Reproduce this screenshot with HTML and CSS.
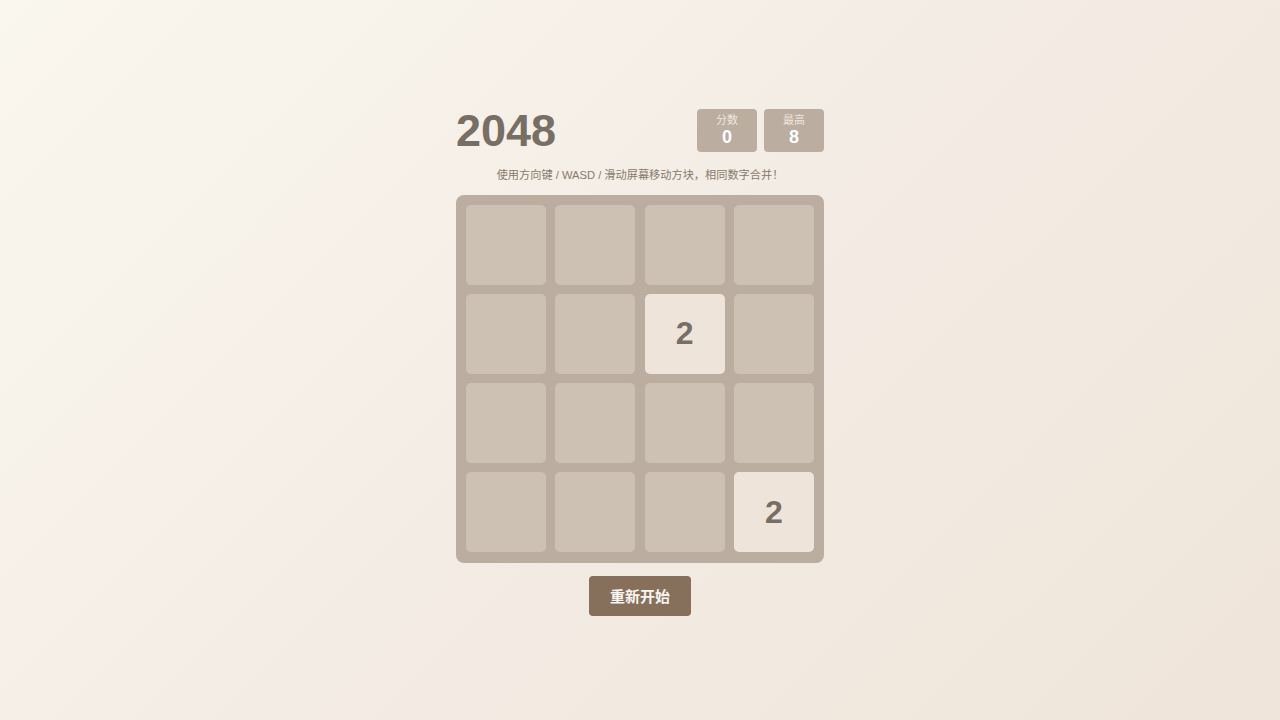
FILE: index.html
```html
<!DOCTYPE html>
<html lang="zh">
<head>
<meta charset="utf-8">
<title>2048</title>
<link rel="stylesheet" href="styles.css">
</head>
<body>
<main class="game">
  <header class="header">
    <h1 class="title">2048</h1>
    <div class="scores">
      <div class="score-box"><span class="score-label">分数</span><span class="score-value">0</span></div>
      <div class="score-box"><span class="score-label">最高</span><span class="score-value">8</span></div>
    </div>
  </header>
  <p class="hint">使用方向键 / WASD / 滑动屏幕移动方块，相同数字合并！</p>
  <div class="board">
    <div class="cell"></div><div class="cell"></div><div class="cell"></div><div class="cell"></div>
    <div class="cell"></div><div class="cell"></div><div class="cell tile-2">2</div><div class="cell"></div>
    <div class="cell"></div><div class="cell"></div><div class="cell"></div><div class="cell"></div>
    <div class="cell"></div><div class="cell"></div><div class="cell"></div><div class="cell tile-2">2</div>
  </div>
  <div class="actions"><button class="restart">重新开始</button></div>
</main>
</body>
</html>
```
FILE: styles.css
```css
* { box-sizing: border-box; }
html, body { margin: 0; height: 100%; }
body {
  font-family: "Liberation Sans", Arial, "Noto Sans CJK SC", sans-serif;
  background: linear-gradient(135deg, #faf7ee 0%, #f3ebe3 55%, #efe5da 100%);
  display: flex;
  align-items: center;
  justify-content: center;
  min-height: 100vh;
  color: #776e65;
}
.game { width: 368px; padding-top: 4px; }
.header {
  display: flex;
  justify-content: space-between;
  align-items: center;
  height: 43px;
}
.title {
  margin: 0;
  font-size: 45px;
  font-weight: bold;
  color: #776e65;
  line-height: 1;
}
.scores { display: flex; gap: 7px; }
.score-box {
  width: 60px;
  height: 43px;
  background: #bbada0;
  border-radius: 4px;
  display: flex;
  flex-direction: column;
  align-items: center;
  justify-content: center;
  padding-top: 1px;
}
.score-label { font-size: 11px; color: #efe7df; line-height: 13px; }
.score-value { font-size: 18px; font-weight: bold; color: #fff; line-height: 20px; }
.hint {
  margin: 14px 0 11px;
  text-align: center;
  font-size: 11.2px;
  line-height: 18px;
  color: #86796c;
}
.board {
  background: #bbada0;
  border-radius: 8px;
  padding: 10px;
  display: grid;
  grid-template-columns: repeat(4, 80px);
  grid-template-rows: repeat(4, 80px);
  gap: 9.33px;
  width: 368px;
  height: 368px;
}
.cell {
  background: #cdc1b4;
  border-radius: 5px;
  display: flex;
  align-items: center;
  justify-content: center;
  font-weight: bold;
  font-size: 32px;
  color: #776e65;
}
.tile-2 { background: #eee4da; }
.actions { display: flex; justify-content: center; margin-top: 13px; }
.restart {
  width: 102px;
  height: 40px;
  border: none;
  border-radius: 4px;
  background: #86705b;
  color: #f9f6f2;
  font-family: "Liberation Sans", Arial, "Noto Sans CJK SC", sans-serif;
  font-size: 15px;
  font-weight: bold;
}
```
